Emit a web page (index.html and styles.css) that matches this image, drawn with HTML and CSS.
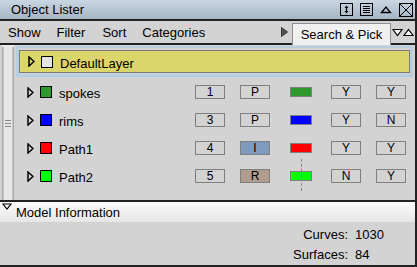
FILE: index.html
```html
<!DOCTYPE html>
<html lang="en">
<head>
    <meta charset="UTF-8">
    <title>Object Lister</title>
    <link rel="stylesheet" href="styles.css">
</head>
<body>
    <div class="window">
        <div class="titlebar">
            <span class="title">Object Lister</span>
            <div class="title-icons">
                <svg width="13" height="13" viewBox="0 0 13 13"><rect x="0.5" y="0.5" width="12" height="12" fill="none" stroke="#000"/><path d="M6.5 2.5 L4.5 5 H8.5 Z M6.5 10.5 L4.5 8 H8.5 Z" fill="#000"/><line x1="6.5" y1="4" x2="6.5" y2="9" stroke="#000" stroke-width="1.2"/></svg>
                <svg width="13" height="13" viewBox="0 0 13 13"><rect x="0.5" y="0.5" width="12" height="12" fill="none" stroke="#000"/><path d="M3 3.5 H10 M3 5.5 H10 M3 7.5 H10 M3 9.5 H10" stroke="#000"/></svg>
                <svg width="12" height="13" viewBox="0 0 12 13"><path d="M1.5 9.5 L6 4 L10.5 9.5 Z" fill="none" stroke="#000" stroke-width="1.3"/></svg>
                <svg width="14" height="14" viewBox="0 0 14 14"><rect x="0.5" y="0.5" width="13" height="13" fill="none" stroke="#000"/><path d="M1 1 L13 13 M13 1 L1 13" stroke="#000"/></svg>
            </div>
        </div>

        <div class="menubar">
            <span class="menu">Show</span>
            <span class="menu">Filter</span>
            <span class="menu">Sort</span>
            <span class="menu">Categories</span>
            <svg class="menu-arrow" width="7" height="10" viewBox="0 0 7 10"><path d="M0.5 0.5 L6.5 5 L0.5 9.5 Z" fill="#555" stroke="#333"/></svg>
            <button class="search-btn">Search &amp; Pick</button>
            <div class="updown">
                <svg width="11" height="9" viewBox="0 0 11 9"><path d="M1 1.5 H10 L5.5 7.5 Z" fill="#fff" stroke="#000" stroke-width="1.2"/></svg>
                <svg width="11" height="9" viewBox="0 0 11 9"><path d="M1 7.5 H10 L5.5 1.5 Z" fill="#fff" stroke="#000" stroke-width="1.2"/></svg>
            </div>
        </div>

        <div class="lister">
            <div class="splitter">
                <div class="grip"></div>
            </div>
            <div class="list">
                <div class="layer-row">
                    <div class="layer-inner">
                        <svg class="expander" width="7" height="11" viewBox="0 0 7 11"><path d="M1 1 L6 5.5 L1 10 Z" fill="none" stroke="#000" stroke-width="1.5"/></svg>
                        <span class="swatch-box layer-box"></span>
                        <span class="name">DefaultLayer</span>
                    </div>
                </div>

                <div class="obj-row">
                    <svg class="expander" width="7" height="11" viewBox="0 0 7 11"><path d="M1 1 L6 5.5 L1 10 Z" fill="none" stroke="#000" stroke-width="1.5"/></svg>
                    <span class="swatch-box" style="background:#2e9a2e"></span>
                    <span class="name">spokes</span>
                    <span class="cell">1</span>
                    <span class="cell">P</span>
                    <span class="color-cell"><span class="chip" style="background:#2e9a2e"></span></span>
                    <span class="cell">Y</span>
                    <span class="cell">Y</span>
                </div>

                <div class="obj-row">
                    <svg class="expander" width="7" height="11" viewBox="0 0 7 11"><path d="M1 1 L6 5.5 L1 10 Z" fill="none" stroke="#000" stroke-width="1.5"/></svg>
                    <span class="swatch-box" style="background:#0000ff"></span>
                    <span class="name">rims</span>
                    <span class="cell">3</span>
                    <span class="cell">P</span>
                    <span class="color-cell"><span class="chip" style="background:#0000ff"></span></span>
                    <span class="cell">Y</span>
                    <span class="cell">N</span>
                </div>

                <div class="obj-row">
                    <svg class="expander" width="7" height="11" viewBox="0 0 7 11"><path d="M1 1 L6 5.5 L1 10 Z" fill="none" stroke="#000" stroke-width="1.5"/></svg>
                    <span class="swatch-box" style="background:#ff0000"></span>
                    <span class="name">Path1</span>
                    <span class="cell">4</span>
                    <span class="cell cell-i">I</span>
                    <span class="color-cell"><span class="chip" style="background:#ff0000"></span></span>
                    <span class="cell">Y</span>
                    <span class="cell">Y</span>
                </div>

                <div class="obj-row">
                    <svg class="expander" width="7" height="11" viewBox="0 0 7 11"><path d="M1 1 L6 5.5 L1 10 Z" fill="none" stroke="#000" stroke-width="1.5"/></svg>
                    <span class="swatch-box" style="background:#00ff00"></span>
                    <span class="name">Path2</span>
                    <span class="cell">5</span>
                    <span class="cell cell-r">R</span>
                    <span class="color-cell"><span class="chip" style="background:#00ff00"></span><span class="dash"></span></span>
                    <span class="cell">N</span>
                    <span class="cell">Y</span>
                </div>
            </div>
        </div>

        <div class="info-header">
            <svg class="info-arrow" width="10" height="7" viewBox="0 0 10 7"><path d="M1 1 H9 L5 6 Z" fill="#fff" stroke="#000" stroke-width="1.2"/></svg>
            <span>Model Information</span>
        </div>
        <div class="info-body">
            <div class="stat"><span>Curves:</span><span class="val">1030</span></div>
            <div class="stat"><span>Surfaces:</span><span class="val">84</span></div>
        </div>
    </div>
</body>
</html>
```

FILE: styles.css
```css
body {
    margin: 0;
    font-family: "Liberation Sans", Arial, sans-serif;
    font-size: 13px;
    color: #000;
    background: #d3d3d3;
}

.window {
    width: 417px;
    height: 267px;
    box-sizing: border-box;
    display: flex;
    flex-direction: column;
    background: #d3d3d3;
    border-right: 2px solid #222;
    border-bottom: 2px solid #222;
    overflow: hidden;
}

.titlebar {
    height: 19px;
    flex: none;
    display: flex;
    align-items: center;
    justify-content: space-between;
    padding: 0 2px 0 11px;
    background: linear-gradient(#c9d6e2, #a6b6c6);
    border-bottom: 2px solid #222;
}

.title-icons {
    display: flex;
    align-items: center;
    gap: 7px;
}

.menubar {
    height: 22px;
    flex: none;
    display: flex;
    align-items: center;
    padding-left: 8px;
    border-bottom: 2px solid #222;
    background: #d3d3d3;
}

.menu {
    margin-right: 16px;
}

.menu:nth-child(2) {
    margin-right: 17px;
}

.menu-arrow {
    margin-left: auto;
    margin-right: 4px;
}

.search-btn {
    font-family: inherit;
    font-size: 13px;
    height: 22px;
    width: 99px;
    margin-top: 3px;
    padding: 0;
    background: #f0f0f0;
    border: 1px solid #909090;
    border-bottom: none;
    color: #000;
}

.updown {
    display: flex;
    align-items: center;
    padding: 0 1px;
}

.lister {
    flex: 1;
    display: flex;
    min-height: 0;
    border-bottom: 2px solid #222;
}

.splitter {
    flex: none;
    width: 12px;
    margin-left: 2px;
    margin-right: 2px;
    display: flex;
    align-items: center;
    justify-content: center;
    background: linear-gradient(90deg, #a8a8a8 0, #a8a8a8 1px, #e6e6e6 2px, #e6e6e6 10px, #a8a8a8 11px);
    border-top: 2px solid #ececec;
}

.grip {
    width: 6px;
    height: 7px;
    background: repeating-linear-gradient(#888 0, #888 1px, transparent 1px, transparent 3px);
}

.list {
    flex: 1;
    min-width: 0;
    padding-top: 1px;
}

.layer-row {
    height: 31px;
    margin-right: 2px;
    box-sizing: border-box;
    border: 3px solid #b7cde0;
    border-top-width: 2px;
    padding: 2px 0 1px;
}

.layer-inner {
    height: 100%;
    box-sizing: border-box;
    display: flex;
    align-items: center;
    padding-left: 8px;
    background: #dbd66a;
    border: 1px solid #7a7a7a;
}

.expander {
    flex: none;
}

.swatch-box {
    width: 10px;
    height: 10px;
    margin-left: 6px;
    border: 1px solid #000;
    flex: none;
}

.layer-box {
    background: #e3e3e3;
}

.name {
    margin-left: 7px;
    padding-top: 3px;
}

.layer-inner .name {
    width: 80px;
}

.obj-row {
    height: 28px;
    display: flex;
    align-items: center;
    padding-left: 11px;
}

.list .layer-row + .obj-row {
    margin-top: 1px;
}

.obj-row .name {
    width: 136px;
    flex: none;
}

.cell {
    width: 28px;
    height: 12px;
    line-height: 13px;
    border: 1px solid #808080;
    text-align: center;
    font-size: 12px;
    margin-right: 15px;
    flex: none;
}

.cell-i {
    background: #7f9abc;
}

.cell-r {
    background: #b29b8f;
}

.color-cell {
    flex: none;
    width: 22px;
    margin: 0 19px 0 5px;
    display: flex;
    justify-content: center;
    position: relative;
}

.chip {
    width: 20px;
    height: 8px;
    border: 1px solid #808080;
}

.dash {
    position: absolute;
    left: 11px;
    top: -12px;
    height: 32px;
    border-left: 1px dashed #888;
}

.info-header {
    height: 20px;
    flex: none;
    display: flex;
    align-items: center;
    background: linear-gradient(#fbfbfb, #e6e6e6);
    position: relative;
    padding-left: 16px;
}

.info-arrow {
    position: absolute;
    left: 2px;
    top: 1px;
}

.info-body {
    height: 43px;
    flex: none;
    display: flex;
    flex-direction: column;
    align-items: flex-end;
    padding: 2px 30px 0 0;
    box-sizing: border-box;
}

.stat {
    height: 21px;
    display: flex;
    align-items: center;
}

.stat .val {
    margin-left: 7px;
    width: 30px;
}
```
